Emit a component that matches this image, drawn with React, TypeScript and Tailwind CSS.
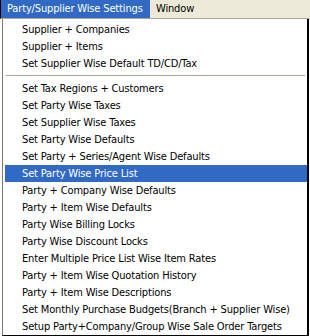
import React from 'react';

type Entry = { label: string; separator?: boolean; active?: boolean };

const entries: Entry[] = [
  { label: 'Supplier + Companies' },
  { label: 'Supplier + Items' },
  { label: 'Set Supplier Wise Default TD/CD/Tax' },
  { label: '', separator: true },
  { label: 'Set Tax Regions + Customers' },
  { label: 'Set Party Wise Taxes' },
  { label: 'Set Supplier Wise Taxes' },
  { label: 'Set Party Wise Defaults' },
  { label: 'Set Party + Series/Agent Wise Defaults' },
  { label: 'Set Party Wise Price List', active: true },
  { label: 'Party + Company Wise Defaults' },
  { label: 'Party + Item Wise Defaults' },
  { label: 'Party Wise Billing Locks' },
  { label: 'Party Wise Discount Locks' },
  { label: 'Enter Multiple Price List Wise Item Rates' },
  { label: 'Party + Item Wise Quotation History' },
  { label: 'Party + Item Wise Descriptions' },
  { label: 'Set Monthly Purchase Budgets(Branch + Supplier Wise)' },
  { label: 'Setup Party+Company/Group Wise Sale Order Targets' },
];

const App: React.FC = () => {
  return (
    <div
      className="w-[310px] h-[336px] overflow-hidden bg-white text-[11px] tracking-[-0.15px] text-black"
      style={{ fontFamily: '"DejaVu Sans Condensed", "Liberation Sans", sans-serif' }}
    >
      {/* Menu bar */}
      <div className="flex h-[19px] bg-[#ece9d8] border-b border-[#aca899] border-l border-l-black">
        <div className="flex items-center w-[149px] h-[18px] bg-[#316ac5] pl-[6px] text-white">
          Party/Supplier Wise Settings
        </div>
        <div className="flex items-center h-[18px] pl-[6px]">Window</div>
      </div>

      {/* Dropdown */}
      <div className="ml-[2px] w-[307px] h-[317px] border-l border-l-[#7f7d72] border-r-2 border-r-black border-b border-b-black pt-[2px] pl-[2px]">
        {entries.map((item, i) =>
          item.separator ? (
            <div key={i} className="h-[8px] pt-[3px] pr-[2px] pl-[1px]">
              <div className="h-px bg-[#aca899]" />
              <div className="h-px bg-white" />
            </div>
          ) : (
            <div
              key={i}
              className={`h-[17px] w-[302px] leading-[17px] pl-[17px] whitespace-nowrap ${
                item.active ? 'bg-[#316ac5] text-white' : ''
              }`}
            >
              {item.label}
            </div>
          )
        )}
      </div>
    </div>
  );
};

export default App;
